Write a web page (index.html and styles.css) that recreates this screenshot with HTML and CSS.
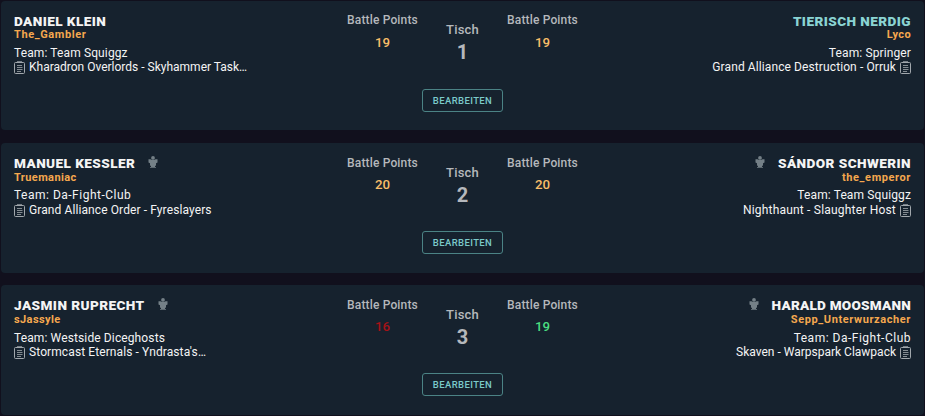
FILE: index.html
```
<!DOCTYPE html>
<html lang="de">
<head>
  <meta charset="UTF-8">
  <meta name="viewport" content="width=device-width, initial-scale=1.0">
  <title>Paarungen</title>
  <link rel="stylesheet" href="styles.css">
</head>
<body>
  <svg class="sprite" width="0" height="0">
    <symbol id="list" viewBox="0 0 11 13">
      <path d="M3 1.500H1.500Q.5 1.500 .5 2.500V11.500Q.5 12.500 1.500 12.500H9.500Q10.500 12.500 10.500 11.500V2.500Q10.500 1.500 9.500 1.500H8" fill="none" stroke="currentColor"/>
      <path d="M3 .3H8V2H3Z" fill="currentColor"/>
      <path d="M3 4.500H8M3 6.500H8.500M3 8.500H8.500M3 10.500H7" stroke="currentColor" stroke-width=".8" fill="none"/>
    </symbol>
    <symbol id="person" viewBox="0 0 10 12">
      <circle cx="5" cy="1.900" r="1.900" fill="currentColor"/>
      <path d="M.5 3.300H2.500L3.800 4H6.200L7.500 3.300H9.500V6.500L8 7.300V9.300L7 10.300H3L2 9.300V7.300L.5 6.500Z" fill="currentColor"/>
      <path d="M3 10H7V11H8V11.800H2V11H3Z" fill="currentColor"/>
    </symbol>
  </svg>

  <main class="pairings">
    <section class="card">
      <div class="player">
        <div class="name"><span>DANIEL KLEIN</span></div>
        <div class="nick spaced">The_Gambler</div>
        <div class="team">Team: Team Squiggz</div>
        <div class="army tight"><svg class="list"><use href="#list"/></svg><span>Kharadron Overlords - Skyhammer Task…</span></div>
      </div>
      <div class="points"><span class="label">Battle Points</span><span class="score">19</span></div>
      <div class="table"><span class="title">Tisch</span><span class="number">1</span><button class="edit">BEARBEITEN</button></div>
      <div class="points"><span class="label">Battle Points</span><span class="score">19</span></div>
      <div class="player right">
        <div class="name me"><span>TIERISCH NERDIG</span></div>
        <div class="nick">Lyco</div>
        <div class="team">Team: Springer</div>
        <div class="army"><span>Grand Alliance Destruction - Orruk</span><svg class="list"><use href="#list"/></svg></div>
      </div>
    </section>

    <section class="card">
      <div class="player">
        <div class="name"><span>MANUEL KESSLER</span><svg class="person"><use href="#person"/></svg></div>
        <div class="nick">Truemaniac</div>
        <div class="team wide">Team: Da-Fight-Club</div>
        <div class="army"><svg class="list"><use href="#list"/></svg><span>Grand Alliance Order - Fyreslayers</span></div>
      </div>
      <div class="points"><span class="label">Battle Points</span><span class="score">20</span></div>
      <div class="table"><span class="title">Tisch</span><span class="number">2</span><button class="edit">BEARBEITEN</button></div>
      <div class="points"><span class="label">Battle Points</span><span class="score">20</span></div>
      <div class="player right">
        <div class="name"><svg class="person"><use href="#person"/></svg><span>SÁNDOR SCHWERIN</span></div>
        <div class="nick spaced">the_emperor</div>
        <div class="team">Team: Team Squiggz</div>
        <div class="army loose"><span>Nighthaunt - Slaughter Host</span><svg class="list"><use href="#list"/></svg></div>
      </div>
    </section>

    <section class="card">
      <div class="player">
        <div class="name"><span>JASMIN RUPRECHT</span><svg class="person"><use href="#person"/></svg></div>
        <div class="nick">sJassyle</div>
        <div class="team">Team: Westside Diceghosts</div>
        <div class="army"><svg class="list"><use href="#list"/></svg><span>Stormcast Eternals - Yndrasta's…</span></div>
      </div>
      <div class="points"><span class="label">Battle Points</span><span class="score loss">16</span></div>
      <div class="table"><span class="title">Tisch</span><span class="number">3</span><button class="edit">BEARBEITEN</button></div>
      <div class="points"><span class="label">Battle Points</span><span class="score win">19</span></div>
      <div class="player right">
        <div class="name tight"><svg class="person"><use href="#person"/></svg><span>HARALD MOOSMANN</span></div>
        <div class="nick spaced">Sepp_Unterwurzacher</div>
        <div class="team wide">Team: Da-Fight-Club</div>
        <div class="army tight"><span>Skaven - Warpspark Clawpack</span><svg class="list"><use href="#list"/></svg></div>
      </div>
    </section>
  </main>
</body>
</html>
```
FILE: styles.css
```
* {
  box-sizing: border-box;
}

body {
  margin: 0;
  background-color: #11101d;
  color: #f4f4f4;
  font-family: Roboto, "Liberation Sans", sans-serif;
  overflow: hidden;
}

.sprite {
  display: block;
}

.pairings {
  display: flex;
  flex-direction: column;
  gap: 12.6px;
  padding: 0.8px 1px 0;
}

.card {
  display: grid;
  grid-template-columns: 1fr 80px 80px 80px 1fr;
  height: 129.7px;
  padding: 0.5px 13px 0;
  border-radius: 4px;
  background-color: #16222e;
}

.player {
  display: flex;
  flex-direction: column;
  padding-top: 12px;
  white-space: nowrap;
}

.right {
  align-items: flex-end;
}

.name {
  display: flex;
  align-items: center;
  height: 15px;
  gap: 13px;
  font-size: 13.6px;
  font-weight: 900;
  letter-spacing: 0.42px;
}

.name.tight {
  letter-spacing: 0.22px;
}

.me {
  color: #8ad4d3;
}

.nick {
  height: 13px;
  line-height: 13px;
  font-size: 11px;
  font-weight: 700;
  letter-spacing: 0.4px;
  color: #f5a84e;
}

.nick.spaced {
  letter-spacing: 0.6px;
}

.team {
  height: 15px;
  margin-top: 4.7px;
  line-height: 15px;
  font-size: 12px;
  letter-spacing: 0.12px;
}

.team.wide {
  letter-spacing: 0.5px;
}

.army {
  display: flex;
  align-items: center;
  gap: 4px;
  height: 14px;
  margin-top: -0.7px;
  font-size: 12px;
  letter-spacing: 0.1px;
}

.army.tight {
  letter-spacing: 0;
}

.army.loose {
  letter-spacing: 0.2px;
}

.list {
  width: 11px;
  height: 13px;
  margin-top: 1px;
  color: #a1a7ac;
}

.person {
  width: 10px;
  height: 12px;
  margin-top: -2px;
  color: #748087;
}

.points,
.table {
  display: flex;
  flex-direction: column;
  align-items: center;
  color: #b5b8bc;
  white-space: nowrap;
}

.label {
  margin-top: 12px;
  line-height: 15px;
  font-size: 12px;
  font-weight: 500;
  letter-spacing: 0.15px;
}

.score {
  margin-top: 5.5px;
  line-height: 18px;
  font-size: 13.3px;
  font-weight: 500;
  color: #f8bd68;
}

.win {
  color: #4ade80;
}

.loss {
  color: #a51217;
}

.title {
  margin-top: 21px;
  line-height: 16px;
  font-size: 13px;
  font-weight: 500;
  letter-spacing: 0.2px;
}

.number {
  margin-top: 2px;
  line-height: 24px;
  font-size: 20px;
  font-weight: 700;
}

.edit {
  width: 81px;
  height: 23px;
  margin-top: 24.3px;
  padding: 0;
  border: 1px solid #4b8385;
  border-radius: 3px;
  background: none;
  color: #7bcaca;
  font-family: inherit;
  font-size: 9.5px;
  font-weight: 500;
  letter-spacing: 0.4px;
}
```
